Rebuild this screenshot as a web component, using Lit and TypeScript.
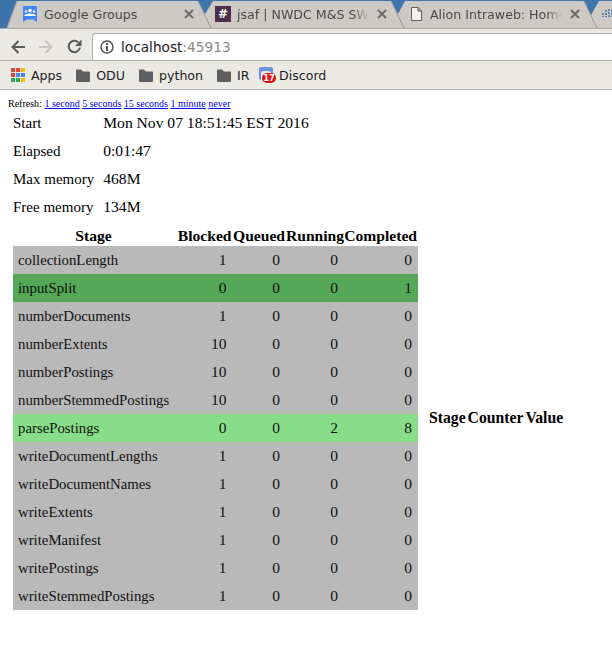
import { LitElement, html, css, svg } from "lit";
import { customElement } from "lit/decorators.js";

const stages: [string, number, number, number, number, string][] = [
  ["collectionLength", 1, 0, 0, 0, ""],
  ["inputSplit", 0, 0, 0, 1, "done"],
  ["numberDocuments", 1, 0, 0, 0, ""],
  ["numberExtents", 10, 0, 0, 0, ""],
  ["numberPostings", 10, 0, 0, 0, ""],
  ["numberStemmedPostings", 10, 0, 0, 0, ""],
  ["parsePostings", 0, 0, 2, 8, "active"],
  ["writeDocumentLengths", 1, 0, 0, 0, ""],
  ["writeDocumentNames", 1, 0, 0, 0, ""],
  ["writeExtents", 1, 0, 0, 0, ""],
  ["writeManifest", 1, 0, 0, 0, ""],
  ["writePostings", 1, 0, 0, 0, ""],
  ["writeStemmedPostings", 1, 0, 0, 0, ""],
];

const info = [
  ["Start", "Mon Nov 07 18:51:45 EST 2016"],
  ["Elapsed", "0:01:47"],
  ["Max memory", "468M"],
  ["Free memory", "134M"],
];

const close = svg`<svg class="close" width="10" height="10" viewBox="0 0 10 10"><path d="M1 1L9 9M9 1L1 9" stroke="#6e6c69" stroke-width="2"/></svg>`;
const folder = html`<svg class="bm-icon" width="14" height="13" viewBox="0 0 14 13"><path d="M0 1.5Q0 .5 1 .5H5L7 2.5H13Q14 2.5 14 3.5V12Q14 13 13 13H1Q0 13 0 12Z" fill="#5f5f5f"/></svg>`;

@customElement("app-root")
export class AppRoot extends LitElement {
  static styles = css`
    :host { display: block; width: 612px; height: 653px; overflow: hidden; background: #fff; font-family: "Liberation Serif", serif; font-size: 15px; color: #000; }
    .chrome { font-family: "DejaVu Sans", sans-serif; font-size: 12.6px; }
    .strip { position: relative; height: 29px; background: #3f74ab; display: flex; box-sizing: border-box; }
    .strip-bg { position: absolute; left: 0; top: 0; }
    .tab { position: relative; display: flex; align-items: center; height: 28px; box-sizing: border-box; color: #4a4947; }
    .t1 { width: 194px; padding-left: 23px; }
    .t2 { width: 193px; padding-left: 21px; }
    .t3 { width: 193px; padding-left: 24px; }
    .t4 { width: 32px; padding-left: 22px; overflow: hidden; }
    .tab-title { flex: 1; min-width: 0; white-space: nowrap; overflow: hidden; margin-left: 8px; -webkit-mask-image: linear-gradient(to right, #000 88%, transparent 100%); mask-image: linear-gradient(to right, #000 88%, transparent 100%); }
    .t1 .tab-title { mask-image: none; -webkit-mask-image: none; margin-left: 7px; }
    .t2 .tab-title { margin-left: 6px; }
    .close { margin-left: 8px; flex: none; }
    .fav { flex: none; display: block; }
    .hash { width: 16px; height: 16px; flex: none; background: #4b2f4c; color: #fff; font-weight: 700; font-size: 12px; line-height: 16px; text-align: center; }
    .toolbar { height: 31px; background: #ebe9e3; display: flex; align-items: flex-end; box-sizing: border-box; padding-left: 11px; }
    .nav { display: flex; gap: 14px; align-items: center; height: 27px; }
    .nav svg { display: block; }
    .omni { margin-left: 10px; flex: 1; height: 27px; box-sizing: border-box; background: #fff; border: 1px solid #b0aea9; border-right: 0; border-bottom: 0; border-radius: 3px 0 0 0; display: flex; align-items: center; padding-left: 7px; }
    .url { margin-left: 7px; color: #1d1d1d; font-size: 13.7px; }
    .url span { color: #8a8a8a; }
    .bookmarks { height: 30px; background: #ebe9e3; border-top: 1px solid #b0aea9; border-bottom: 1px solid #b3b1ac; box-sizing: border-box; display: flex; align-items: center; padding-left: 11px; color: #1f1f1f; }
    .bm { display: flex; align-items: center; margin-right: 13.500px; }
    .bm.short { margin-right: 9.500px; }
    .bm-icon { display: block; margin-right: 6.500px; flex: none; }
    .apps { display: grid; grid-template-columns: repeat(3, 4px); gap: 1px; margin-right: 6px; }
    .apps i { display: block; height: 4px; }
    .badge-wrap { position: relative; width: 15px; height: 16px; margin-right: 5px; }
    .badge-wrap .page { position: absolute; inset: 0 1px 3px 0; background: #6f92d8; border-radius: 2px; }
    .badge-wrap .page::after { content: ""; position: absolute; left: 2px; right: 2px; top: 4px; bottom: 0; background: #e6e9f2; border-radius: 3px 3px 0 0; }
    .badge { position: absolute; right: -2px; bottom: 0; width: 14px; height: 10px; border-radius: 5px; background: #e00d0d; color: #fff; font: 700 8.500px/10px "DejaVu Sans", sans-serif; text-align: center; letter-spacing: -.2px; }
    .page-body { padding: 8px 0 0 8px; }
    .refresh { font-size: 10px; line-height: 11px; height: 11px; white-space: pre; }
    .refresh a { color: #00e; text-decoration: underline; }
    .info { border-spacing: 0; margin: 0 0 0 5px; }
    .info td { padding: 0 9px 0 0; height: 28px; }
    .info td.val { font-size: 15.6px; }
    .main { display: flex; align-items: center; gap: 10px; margin-left: 5px; margin-top: 5px; }
    table.stages { border-collapse: collapse; table-layout: fixed; width: 405px; flex: none; }
    .c-name { width: 162px; }
    .c-blocked { width: 57.500px; }
    .c-queued { width: 53.500px; }
    .c-running { width: 58px; }
    .c-completed { width: 74px; }
    .stages th { padding: 0 1px 0 0; height: 20px; text-align: right; font-weight: 700; font-size: 15.6px; white-space: nowrap; }
    .stages th.name { text-align: center; }
    .stages td { height: 28px; padding: 0 6px 0 5px; text-align: right; background: #b9b9b9; color: #111; font-size: 15.500px; }
    .stages td.name { text-align: left; font-size: 14.8px; white-space: nowrap; }
    .stages tr.done td { background: #54a857; }
    .stages tr.active td { background: #88de88; }
    .counters { border-collapse: collapse; }
    .counters th { padding: 0 1px; font-weight: 700; font-size: 15.7px; white-space: nowrap; }
  `;

  render() {
    return html`
      <div class="chrome">
        <div class="strip">
          <svg class="strip-bg" width="612" height="29" viewBox="0 0 612 29">
            <path d="M7 28L17 1H198L205 14L213 1H391L398 14L405 1H584L591 15L599 1H612V28Z" fill="#cdc9c4"/>
            <path d="M7 28L17 1" stroke="#a8a5a0" fill="none"/>
            <path d="M198 1L211 28M391 1L404 28M584 1L597 28" stroke="#9d9a96" fill="none"/>
            <rect y="28" width="612" height="1" fill="#a9a6a1"/>
          </svg>
          <div class="tab t1">
            <svg class="fav" width="14" height="17" viewBox="0 0 14 17">
              <path d="M1 0H13Q14 0 14 1V16L10 13.5H4L0 16V1Q0 0 1 0Z" fill="#4285f4"/>
              <circle cx="7" cy="4.6" r="1.8" fill="#fff"/><circle cx="3" cy="5.6" r="1.3" fill="#dbe6fd"/><circle cx="11" cy="5.6" r="1.3" fill="#dbe6fd"/>
              <path d="M1.5 10V9Q3 7.5 7 7.5T12.5 9V10Z" fill="#fff"/>
            </svg>
            <span class="tab-title">Google Groups</span>${close}
          </div>
          <div class="tab t2">
            <span class="hash">#</span>
            <span class="tab-title">jsaf | NWDC M&amp;S SW</span>${close}
          </div>
          <div class="tab t3">
            <svg class="fav" width="11" height="14" viewBox="0 0 11 14"><path d="M.5.5H7L10.500 4V13.500H.5ZM7 .5V4H10.500" fill="#f4f2ef" stroke="#5e5d5b"/></svg>
            <span class="tab-title">Alion Intraweb: Home</span>${close}
          </div>
          <div class="tab t4">
            <svg class="fav" width="12" height="12" viewBox="0 0 12 12"><path d="M4 2V9M7 1V9M10 2V9M1 5V9" stroke="#3c6ea5" stroke-width="1.500" stroke-dasharray="2 1"/></svg>
          </div>
        </div>
        <div class="toolbar">
          <div class="nav">
            <svg width="14" height="14" viewBox="0 0 14 14"><path d="M14 7H2M7.500 1L1.500 7L7.500 13" fill="none" stroke="#5a5a5a" stroke-width="2"/></svg>
            <svg width="14" height="14" viewBox="0 0 14 14"><path d="M0 7H12M6.500 1L12.500 7L6.500 13" fill="none" stroke="#c9c7c3" stroke-width="2"/></svg>
            <svg width="15" height="15" viewBox="0 0 15 15"><path d="M13 8.500A5.700 5.700 0 1 1 11.300 3.300" fill="none" stroke="#5a5a5a" stroke-width="2"/><path d="M14.500 .5V7H8Z" fill="#5a5a5a"/></svg>
          </div>
          <div class="omni">
            <svg width="14" height="14" viewBox="0 0 14 14"><circle cx="7" cy="7" r="6" fill="none" stroke="#555" stroke-width="1.500"/><path d="M6 6H8V11H6ZM6 3H8V5H6Z" fill="#555"/></svg>
            <div class="url">localhost<span>:45913</span></div>
          </div>
        </div>
        <div class="bookmarks">
          <div class="bm">
            <div class="apps">
              ${["#ea4335","#ea4335","#fbbc05","#ea4335","#4285f4","#4285f4","#34a853","#34a853","#fbbc05"].map((c) => html`<i style="background:${c}"></i>`)}
            </div>Apps
          </div>
          <div class="bm">${folder}ODU</div>
          <div class="bm">${folder}python</div>
          <div class="bm short">${folder}IR</div>
          <div class="bm"><div class="badge-wrap"><div class="page"></div><div class="badge">17</div></div>Discord</div>
        </div>
      </div>
      <div class="page-body">
        <div class="refresh">Refresh: <a href="#">1 second</a> <a href="#">5 seconds</a> <a href="#">15 seconds</a> <a href="#">1 minute</a> <a href="#">never</a></div>
        <table class="info">
          ${info.map(([k, v]) => html`<tr><td>${k}</td><td class="val">${v}</td></tr>`)}
        </table>
        <div class="main">
          <table class="stages">
            <colgroup><col class="c-name"><col class="c-blocked"><col class="c-queued"><col class="c-running"><col class="c-completed"></colgroup>
            <tr><th class="name">Stage</th><th>Blocked</th><th>Queued</th><th>Running</th><th>Completed</th></tr>
            ${stages.map((s) => html`<tr class=${s[5]}><td class="name">${s[0]}</td><td>${s[1]}</td><td>${s[2]}</td><td>${s[3]}</td><td>${s[4]}</td></tr>`)}
          </table>
          <table class="counters"><tr><th>Stage</th><th>Counter</th><th>Value</th></tr></table>
        </div>
      </div>
    `;
  }
}
